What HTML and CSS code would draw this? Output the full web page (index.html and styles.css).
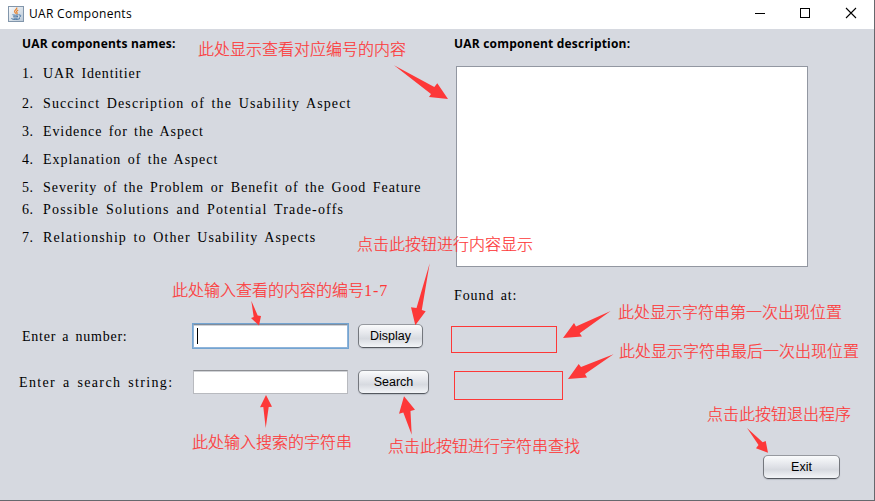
FILE: index.html
```html
<!DOCTYPE html>
<html lang="zh">
<head>
<meta charset="utf-8">
<title>UAR Components</title>
<link rel="stylesheet" href="styles.css">
</head>
<body>
<div class="window">
  <header class="titlebar">
    <svg class="app-icon" width="16" height="16" viewBox="0 0 16 16">
      <defs><linearGradient id="tile" x1="0" y1="0" x2="1" y2="1"><stop offset="0" stop-color="#fbfcfd"/><stop offset="1" stop-color="#b9c8d6"/></linearGradient></defs>
      <rect x=".5" y=".5" width="15" height="15" fill="url(#tile)" stroke="#8296ab"/>
      <path d="M8.700 1.500c1 1.800-2.700 2.500-2.100 4.200.2.700.9 1.200 1.100 1.900M10.200 4c-1.500.8-2.200 1.500-1.200 2.700.4.500 0 1.200-.5 1.500" fill="none" stroke="#e8822c" stroke-width="1.200"/>
      <path d="M4.500 8.700c1.500.7 4.500.6 6 0M5.300 10.300c1 .6 3.500.6 4.700 0M5.600 11.900c1 .5 3 .5 4 0M3.400 12.500c1 1.300 7 1.300 8.600 0M11 9c2.300-.5 2.300 1.700.2 2.300" fill="none" stroke="#3f6f9f" stroke-width=".95"/>
    </svg>
    <span class="title">UAR Components</span>
    <svg class="controls" width="106" height="14" viewBox="0 0 106 14" shape-rendering="crispEdges">
      <path d="M0 7.500h10" stroke="#000"/>
      <rect x="45.500" y="2.500" width="9" height="9" fill="none" stroke="#000"/>
      <path d="M91 2l10 10M101 2l-10 10" stroke="#000" stroke-width="1.100" shape-rendering="auto"/>
    </svg>
  </header>
  <main class="content">
    <section class="left">
      <h2>UAR components names:</h2>
      <ol class="names">
        <li class="n1"><b>1.</b><span>UAR Identitier</span></li>
        <li class="n2"><b>2.</b><span>Succinct Description of the Usability Aspect</span></li>
        <li class="n3"><b>3.</b><span>Evidence for the Aspect</span></li>
        <li class="n4"><b>4.</b><span>Explanation of the Aspect</span></li>
        <li class="n5"><b>5.</b><span>Severity of the Problem or Benefit of the Good Feature</span></li>
        <li class="n6"><b>6.</b><span>Possible Solutions and Potential Trade-offs</span></li>
        <li class="n7"><b>7.</b><span>Relationship to Other Usability Aspects</span></li>
      </ol>
      <div class="row">
        <label class="number-label">Enter a number:</label>
        <div class="field focused"><i class="caret"></i></div>
        <button class="display">Display</button>
      </div>
      <div class="row">
        <label class="search-label">Enter a search string:</label>
        <div class="field"></div>
        <button class="search">Search</button>
      </div>
    </section>
    <section class="right">
      <h2>UAR component description:</h2>
      <div class="description"></div>
      <p class="found">Found at:</p>
      <div class="result first"></div>
      <div class="result last"></div>
      <button class="exit">Exit</button>
    </section>
  </main>
</div>
<svg class="arrows" width="875" height="501" viewBox="0 0 875 501">
  <path d="M394 65.300L434.300 87L437.300 83.300L448 99L429 97L431 94z"/>
  <path d="M429.700 263.300L421.800 310L425.700 311.300L415.300 325.300L411 307.300L416.500 308z"/>
  <path d="M251.300 300.700L257.700 315.500L261 316L259 325.500L251 318L253.700 317z"/>
  <path d="M266 395L272 406.700L268.700 407L265.700 428L263.300 407L260 407.300z"/>
  <path d="M404 396.300L415 409.700L410.500 411L411.700 434.700L403.300 412.500L399 413.700z"/>
  <path d="M610.700 311L579.700 333.300L582 336.500L563 338L574 323L576 326.500z"/>
  <path d="M613.500 354.300L585 374L587 377.500L568 379L578.700 364L581 367z"/>
  <path d="M747 428L762.700 442.300L765.700 441L768 452.700L756 448.300L758.500 445z"/>
</svg>
<div class="note note-content">此处显示查看对应编号的内容</div>
<div class="note note-display">点击此按钮进行内容显示</div>
<div class="note note-number">此处输入查看的内容的编号<span>1-7</span></div>
<div class="note note-string">此处输入搜索的字符串</div>
<div class="note note-search">点击此按钮进行字符串查找</div>
<div class="note note-first">此处显示字符串第一次出现位置</div>
<div class="note note-last">此处显示字符串最后一次出现位置</div>
<div class="note note-exit">点击此按钮退出程序</div>
</body>
</html>
```
FILE: styles.css
```css
* { box-sizing: border-box; }
body { margin: 0; width: 875px; height: 501px; overflow: hidden; position: relative; background: #d6d9e0; }
.window { width: 875px; height: 501px; border-right: 1px solid #66686d; border-bottom: 1px solid #66686d; }
.titlebar { height: 29px; background: #fff; display: flex; align-items: center; padding: 0 13px 2px 8px; }
.title { font: 12px/18px "Open Sans", sans-serif; margin-left: 5px; letter-spacing: .3px; color: #000; }
.controls { margin-left: auto; position: relative; top: -1px; }
.content { display: flex; height: 471px; background: #d6d9e0; }
.left { width: 451px; padding-top: 5px; }
.right { flex: 1; display: flex; flex-direction: column; padding-top: 5px; }
h2 { margin: 0 0 0 22px; font: bold 12px/20px "Open Sans", sans-serif; letter-spacing: .2px; color: #000; }
.right h2 { margin-left: 3px; }

.names { list-style: none; margin: 9px 0 0 22px; padding: 0; height: 260px; }
.names li, label, .found { font: 14px/20px "Liberation Serif", serif; word-spacing: 2px; color: #000; white-space: nowrap; }
.names li { display: flex; height: 20px; margin-bottom: 8px; padding-top: 1px; }
.names b { width: 21px; font-weight: normal; letter-spacing: .5px; }
.names .n1 { letter-spacing: .84px; margin-bottom: 10px; }
.names .n2 { letter-spacing: 1.12px; }
.names .n3 { letter-spacing: .9px; }
.names .n4 { letter-spacing: .97px; }
.names .n5 { letter-spacing: .95px; margin-bottom: 2px; }
.names .n6 { letter-spacing: 1.2px; }
.names .n7 { letter-spacing: 1.1px; }

.row { display: flex; align-items: center; height: 26px; margin-bottom: 20px; }
label { width: 193px; flex: none; padding: 2px 0 0 22px; }
.number-label { letter-spacing: .75px; }
label.search-label { letter-spacing: 1.36px; padding-left: 19px; }
.field { width: 155px; height: 24px; background: #fff; border: 1px solid #b8babf; border-top-color: #8c8e93; box-shadow: inset 0 1px #d0d2d6; }
.focused { box-shadow: 0 0 0 1px #73a4d1, inset 0 1px #d0d2d6; border-color: #8fb4da; border-top-color: #7e8c9c; }
.caret { display: block; width: 1px; height: 16px; margin: 3px 0 0 3px; background: #000; }
button { height: 24px; padding: 0; margin: 0 0 0 10px; border: 1px solid #74777d; border-top-color: #96999f; border-bottom-color: #54585f; border-radius: 5px; background: linear-gradient(#fafbfc, #e4e6eb 40%, #d7dae0 62%, #f3f5f8); box-shadow: 0 1px 1px #babec6; font: 12.5px/20px "Liberation Sans", sans-serif; color: #000; }
.display { width: 65px; }
.search { width: 71px; }

.description { width: 352px; height: 201px; margin: 12px 0 0 5px; background: #fff; border: 1px solid #9297a1; }
.found { margin: 19px 0 0 3px; letter-spacing: .9px; }
.result { border: 1px solid #fd3838; }
.first { width: 106px; height: 27px; margin-top: 20px; }
.last { width: 109px; height: 29px; margin: 18px 0 0 3px; }
.exit { width: 77px; margin: 55px 0 0 312px; }

.arrows { position: absolute; left: 0; top: 0; fill: #fd3838; }
.note { position: absolute; color: #fd3838; font: 300 16px/20px "Noto Sans CJK SC", sans-serif; -webkit-text-stroke: .2px #fd3838; white-space: nowrap; }
.note span { font: 16px/20px "Liberation Serif", serif; letter-spacing: 1px; -webkit-text-stroke: 0; }
.note-content { left: 198px; top: 38px; }
.note-display { left: 357px; top: 233px; }
.note-number { left: 172px; top: 279px; }
.note-string { left: 192px; top: 431px; }
.note-search { left: 388px; top: 435px; }
.note-first { left: 618px; top: 301px; }
.note-last { left: 619px; top: 340px; }
.note-exit { left: 707px; top: 403px; }
```
